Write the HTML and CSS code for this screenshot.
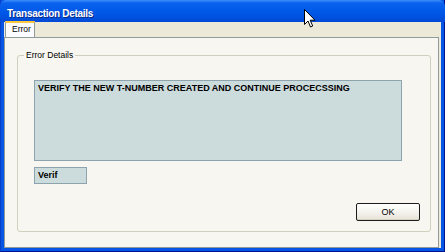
FILE: index.html
```html
<!doctype html>
<html lang="en">

<head>
    <meta charset="UTF-8" />
    <title>Transaction Details</title>
    <link rel="stylesheet" href="styles.css">
</head>

<body>
    <div class="window">
        <div class="titlebar">
            <span class="title">Transaction Details</span>
        </div>

        <div class="client">
            <div class="tabs">
                <div class="tab active">Error</div>
            </div>

            <div class="panel">
                <fieldset class="group">
                    <legend>Error Details</legend>
                    <div class="message">VERIFY THE NEW T-NUMBER CREATED AND CONTINUE PROCECSSING</div>
                    <div class="status">Verif</div>
                    <div class="actions">
                        <button class="ok-btn">OK</button>
                    </div>
                </fieldset>
            </div>
        </div>

        <!-- mouse pointer over the title bar -->
        <svg class="cursor" width="12" height="19" viewBox="0 0 12 19">
            <path d="M0.5 0.5 L0.5 15.5 L4 12 L6.5 18 L8.7 17 L6.2 11.2 L11 11.2 Z"
                fill="#fff" stroke="#000" stroke-width="1" stroke-linejoin="miter" />
        </svg>
    </div>
</body>

</html>
```

FILE: styles.css
```css
html,
body {
    margin: 0;
    padding: 0;
    overflow: hidden;
}

body {
    font-family: "Liberation Sans", Arial, sans-serif;
}

.window {
    position: relative;
    width: 445px;
    height: 252px;
    box-sizing: border-box;
    background: #0556e4;
    border-left: 1px solid #0a3fc4;
    border-right: 1px solid #00138c;
    border-bottom: 1px solid #00138c;
    display: flex;
    flex-direction: column;
}

.titlebar {
    height: 22px;
    box-sizing: border-box;
    margin: 0 -1px;
    padding: 3px 0 0 7px;
    background: linear-gradient(to bottom, #3d8ff8 0, #0a62ee 3px, #0058e8 55%, #0049d6 100%);
    border-radius: 6px 6px 0 0;
}

.title {
    color: #fff;
    font-weight: bold;
    font-size: 10px;
    letter-spacing: -0.3px;
    line-height: 17px;
    text-shadow: 1px 1px 0 #0a2a8a;
}

.client {
    flex: 1;
    margin: 0 3px 4px 3px;
    background: #ece9d8;
    display: flex;
    flex-direction: column;
}

.tabs {
    height: 15px;
    display: flex;
    padding-left: 1px;
    position: relative;
    z-index: 1;
}

.tab {
    font-size: 8.5px;
    line-height: 13px;
    padding: 0 4px 0 6px;
    width: 18px;
    color: #000;
    background: #fcfcfe;
    border: 1px solid #919b9c;
    border-top: 2px solid #ffc83c;
    border-bottom: none;
    box-sizing: content-box;
    height: 14px;
    margin-top: -1px;
}

.panel {
    flex: 1;
    margin-right: 2px;
    background: #f7f6f1;
    border: 1px solid #919b9c;
    padding: 12px 7px 15px 12px;
    display: flex;
    flex-direction: column;
}

.group {
    margin: 0;
    padding: 20px 10px 10px 6px;
    border: 1px solid #d0d0bf;
    border-radius: 3px;
    display: flex;
    flex-direction: column;
}

.group legend {
    font-size: 8.5px;
    line-height: 10px;
    color: #000;
    padding: 0 2px;
}

.message {
    width: 368px;
    height: 81px;
    box-sizing: border-box;
    margin-left: 10px;
    background: #ccdcdc;
    border: 1px solid #8da3ae;
    padding: 2px 3px;
    font-size: 9px;
    font-weight: bold;
    line-height: 11px;
    color: #000;
}

.status {
    width: 53px;
    height: 17px;
    box-sizing: border-box;
    margin: 6px 0 0 10px;
    background: #ccdcdc;
    border: 1px solid #8da3ae;
    padding: 2px 3px;
    font-size: 9px;
    font-weight: bold;
    line-height: 11px;
}

.actions {
    display: flex;
    justify-content: flex-end;
    margin-top: 19px;
}

.ok-btn {
    width: 64px;
    height: 18px;
    padding: 0;
    font-family: "Liberation Sans", Arial, sans-serif;
    font-size: 9px;
    color: #000;
    background: linear-gradient(to bottom, #ffffff 0%, #f4f3ee 50%, #e6e3d6 100%);
    border: 1px solid #1c1c1c;
    border-radius: 2px;
    box-shadow: inset 0 -1px 0 #d6d0c5;
}

.cursor {
    position: absolute;
    left: 303px;
    top: 9px;
}
```
